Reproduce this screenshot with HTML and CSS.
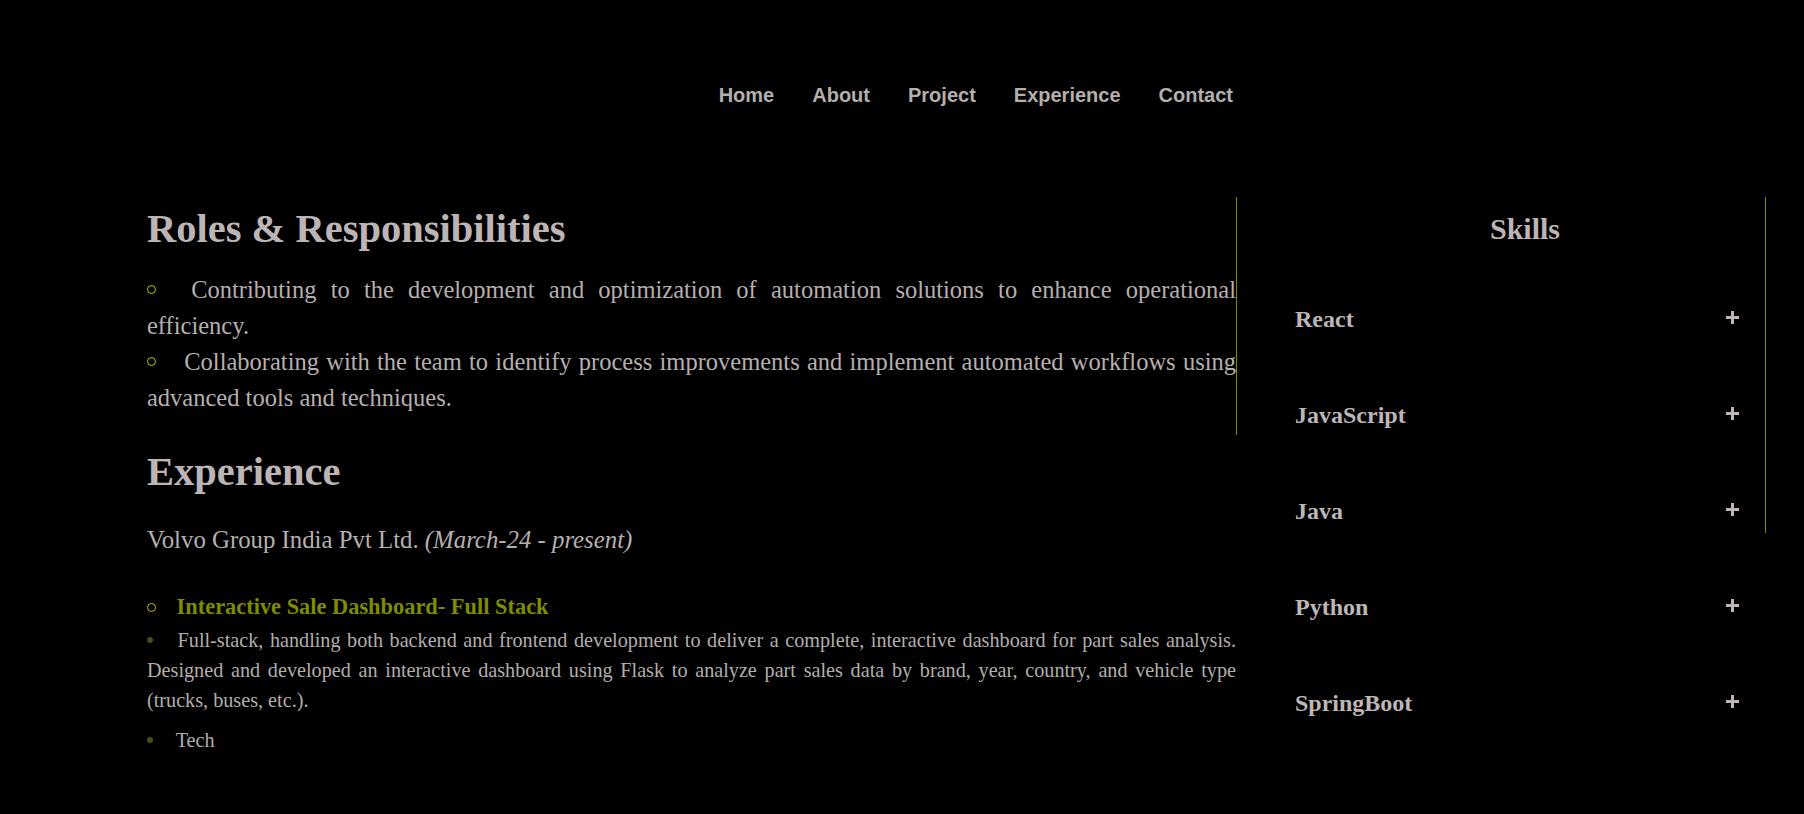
FILE: index.html
```html
<!DOCTYPE html>
<html lang="en">
<head>
<meta charset="utf-8">
<title>Experience</title>
<link rel="stylesheet" href="styles.css">
</head>
<body>
<header class="site-header">
  <nav>
    <ul class="nav-list">
      <li><a href="#">Home</a></li>
      <li><a href="#">About</a></li>
      <li><a href="#">Project</a></li>
      <li><a href="#">Experience</a></li>
      <li><a href="#">Contact</a></li>
    </ul>
  </nav>
</header>
<main class="layout">
  <div class="content">
    <section class="roles">
      <h2 class="heading">Roles &amp; Responsibilities</h2>
      <ul class="role-list">
        <li><span class="ring ring-role"></span> Contributing to the development and optimization of automation solutions to enhance operational efficiency.</li>
        <li><span class="ring ring-role"></span> Collaborating with the team to identify process improvements and implement automated workflows using advanced tools and techniques.</li>
      </ul>
    </section>
    <section class="experience">
      <h2 class="heading">Experience</h2>
      <p class="company">Volvo Group India Pvt Ltd. <em>(March-24 - present)</em></p>
      <ul class="project-list">
        <li class="project">
          <h3 class="project-title"><span class="ring ring-project"></span> Interactive Sale Dashboard- Full Stack</h3>
          <p class="project-text"><span class="dot"></span> Full-stack, handling both backend and frontend development to deliver a complete, interactive dashboard for part sales analysis. Designed and developed an interactive dashboard using Flask to analyze part sales data by brand, year, country, and vehicle type (trucks, buses, etc.).</p>
          <p class="project-text tech"><span class="dot"></span> Tech</p>
        </li>
      </ul>
    </section>
  </div>
  <aside class="skills">
    <h3 class="skills-title">Skills</h3>
    <ul class="skill-list">
      <li class="skill"><span>React</span><svg class="plus" width="13" height="13" viewBox="0 0 13 13"><rect x="5" y="0" width="3" height="13"/><rect x="0" y="5" width="13" height="3"/></svg></li>
      <li class="skill"><span>JavaScript</span><svg class="plus" width="13" height="13" viewBox="0 0 13 13"><rect x="5" y="0" width="3" height="13"/><rect x="0" y="5" width="13" height="3"/></svg></li>
      <li class="skill"><span>Java</span><svg class="plus" width="13" height="13" viewBox="0 0 13 13"><rect x="5" y="0" width="3" height="13"/><rect x="0" y="5" width="13" height="3"/></svg></li>
      <li class="skill"><span>Python</span><svg class="plus" width="13" height="13" viewBox="0 0 13 13"><rect x="5" y="0" width="3" height="13"/><rect x="0" y="5" width="13" height="3"/></svg></li>
      <li class="skill"><span>SpringBoot</span><svg class="plus" width="13" height="13" viewBox="0 0 13 13"><rect x="5" y="0" width="3" height="13"/><rect x="0" y="5" width="13" height="3"/></svg></li>
    </ul>
  </aside>
</main>
</body>
</html>
```
FILE: styles.css
```css
html, body {
  margin: 0;
  padding: 0;
  background: #000;
}
body {
  font-family: "Liberation Serif", "Times New Roman", serif;
  color: #b6afaf;
  overflow: hidden;
  height: 814px;
}
ul {
  list-style: none;
  margin: 0;
  padding: 0;
}
h2, h3, p {
  margin: 0;
}

/* header */
.site-header {
  display: flex;
  justify-content: flex-end;
  padding: 84px 571px 0 0;
}
.nav-list {
  display: flex;
  gap: 38px;
}
.nav-list a {
  font-family: "Liberation Sans", Arial, sans-serif;
  font-weight: bold;
  font-size: 20px;
  line-height: 23px;
  color: #b4aeae;
  text-decoration: none;
  display: block;
}

/* layout */
.layout {
  display: flex;
  align-items: flex-start;
  padding: 90px 0 0 147px;
}
.content {
  width: 1090px;
  flex: none;
}
.roles {
  border-right: 1px solid #7e8f06;
  padding: 9px 0 19px;
}
.heading {
  font-size: 40.5px;
  line-height: 46px;
  font-weight: bold;
  color: #bdb5b5;
}
.role-list {
  margin-top: 20px;
  width: 1089px;
  font-size: 24.5px;
  line-height: 36px;
  text-align: justify;
}
.ring {
  display: inline-block;
  width: 9px;
  height: 9px;
  box-sizing: border-box;
  border: 1.5px solid #c4c400;
  border-radius: 50%;
  vertical-align: 1px;
}
.ring-role {
  margin-right: 21px;
  vertical-align: 4px;
}
.ring-project {
  margin-right: 15px;
  vertical-align: 2px;
}

.experience {
  width: 1089px;
  padding-top: 14px;
}
.company {
  margin-top: 27px;
  font-size: 24.8px;
  line-height: 36px;
}
.company em {
  font-style: italic;
}
.project-list {
  margin-top: 34px;
}
.project-title {
  font-size: 22.4px;
  line-height: 30px;
  font-weight: bold;
  color: #7f8c00;
}
.project-text {
  font-size: 20.2px;
  line-height: 30px;
  text-align: justify;
  color: #b3adad;
}
.project-title + .project-text {
  margin-top: 3px;
}
.tech {
  margin-top: 10px;
}
.dot {
  display: inline-block;
  width: 6px;
  height: 6px;
  border-radius: 50%;
  background: #4b4b12;
  margin-right: 18px;
  vertical-align: 4px;
}

/* skills */
.skills {
  flex: none;
  width: 529px;
  height: 336px;
  box-sizing: border-box;
  border-right: 1px solid #7e8f06;
  padding: 15px 10px 0 58px;
}
.skills-title {
  font-size: 30px;
  line-height: 34px;
  font-weight: bold;
  text-align: center;
  color: #bdb5b5;
}
.skill-list {
  margin-top: 25px;
}
.skill {
  display: flex;
  justify-content: space-between;
  align-items: center;
  padding: 33px 16px 33px 0;
  font-size: 24px;
  line-height: 30px;
  font-weight: bold;
  color: #bdb6b6;
}
.plus {
  fill: #bdb6b6;
  margin-top: -3px;
  flex: none;
}
```
